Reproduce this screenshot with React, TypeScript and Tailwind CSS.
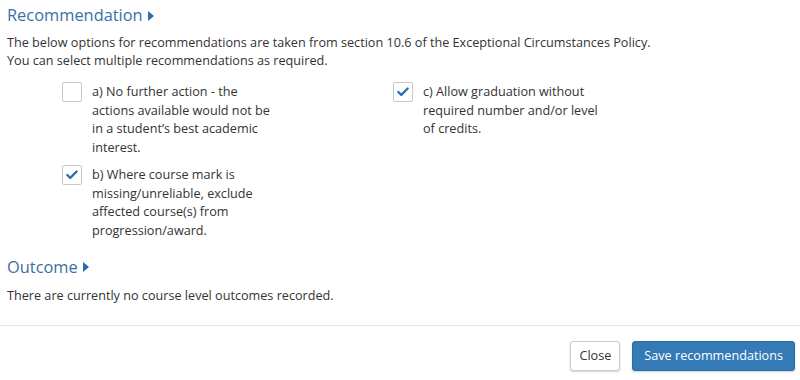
import { Check } from "lucide-react";

type Option = { id: string; label: string; checked: boolean };

const options: Option[] = [
  {
    id: "a",
    label: "a) No further action - the actions available would not be in a student’s best academic interest.",
    checked: false,
  },
  {
    id: "c",
    label: "c) Allow graduation without required number and/or level of credits.",
    checked: true,
  },
  {
    id: "b",
    label: "b) Where course mark is missing/unreliable, exclude affected course(s) from progression/award.",
    checked: true,
  },
];

function SectionTitle({ children }: { children: React.ReactNode }) {
  return (
    <h3 className="flex items-center gap-[5px] text-[16.4px] leading-[22px] text-[#3c6fa6]">
      {children}
      <svg width="6" height="10" viewBox="0 0 6 10" className="mt-[1px]">
        <path d="M0 0 L6 5 L0 10 Z" fill="#2d6aa8" />
      </svg>
    </h3>
  );
}

function Checkbox({ option }: { option: Option }) {
  return (
    <label className="flex items-start gap-[10px]">
      <span className="flex h-[20px] w-[20px] shrink-0 items-center justify-center rounded-[2px] border border-[#c8c8c8] bg-white">
        {option.checked && <Check className="h-[14px] w-[14px] text-[#2f6db0]" strokeWidth={4} />}
      </span>
      <span className="w-[182px] text-[12.65px] leading-[18.7px] text-[#333]">{option.label}</span>
    </label>
  );
}

export default function App() {
  return (
    <div
      className="h-[380px] w-[800px] bg-white"
      style={{ fontFamily: '"Open Sans", "Liberation Sans", sans-serif' }}
    >
      <div className="px-[7px] pt-[4px]">
        <SectionTitle>Recommendation</SectionTitle>
        <p className="mt-[7px] text-[12.65px] leading-[18px] text-[#333]">
          The below options for recommendations are taken from section 10.6 of the Exceptional Circumstances Policy.
          <br />
          You can select multiple recommendations as required.
        </p>

        <div className="ml-[55px] mt-[13px] grid grid-cols-[331px_331px] gap-y-[8px]">
          {options.map((o) => (
            <Checkbox key={o.id} option={o} />
          ))}
        </div>

        <div className="mt-[16px]">
          <SectionTitle>Outcome</SectionTitle>
          <p className="mt-[8px] text-[12.65px] leading-[18px] text-[#333]">
            There are currently no course level outcomes recorded.
          </p>
        </div>
      </div>

      <div className="mt-[21px] flex justify-end gap-[12px] border-t border-[#e5e5e5] px-[5px] pt-[15px]">
        <button className="h-[30px] rounded-[3px] border border-[#ccc] bg-white px-[8px] text-[12.65px] text-[#333] shadow-[0_1px_2px_rgba(0,0,0,0.18)]">
          Close
        </button>
        <button className="h-[30px] rounded-[3px] border border-[#2e6da4] bg-[#337ab7] px-[11px] text-[12.65px] text-white shadow-[0_1px_2px_rgba(0,0,0,0.2)]">
          Save recommendations
        </button>
      </div>
    </div>
  );
}
